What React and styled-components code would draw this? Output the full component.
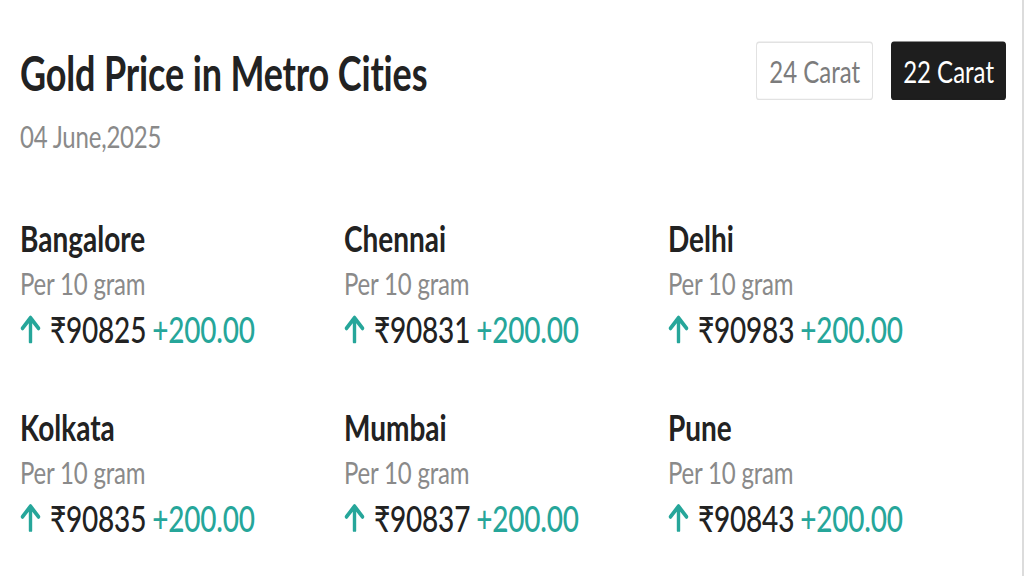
import React, { useState } from "react";
import styled, { createGlobalStyle } from "styled-components";

const GlobalStyle = createGlobalStyle`
  html, body {
    margin: 0;
    padding: 0;
    background: #ffffff;
  }
  body {
    font-family: Lato, "Noto Sans", "DejaVu Sans", sans-serif;
    color: #222;
  }
`;

// the screenshot is stretched vertically, so the whole page is scaled in y
const Frame = styled.div`
  height: 100vh;
  overflow: hidden;
  box-sizing: border-box;
  border-right: 2px solid #dcdcdc;
`;

const Page = styled.div`
  transform: scaleY(1.3);
  transform-origin: top left;
  padding: 32px 16px 0 20px;
`;

const Header = styled.div`
  display: flex;
  justify-content: space-between;
  align-items: flex-start;
`;

const Title = styled.h1`
  margin: 6px 0 0;
  font-size: 36px;
  line-height: 36px;
  font-weight: 700;
  color: #222;
  letter-spacing: -0.15px;
`;

const DateText = styled.div`
  margin-top: 19px;
  font-size: 24px;
  line-height: 24px;
  color: #8a8a8a;
  letter-spacing: -0.2px;
`;

const Toggle = styled.div`
  display: flex;
  gap: 18px;
`;

const CaratButton = styled.button`
  height: 45px;
  padding: 0 ${(p) => (p.$active ? "11px" : "12px")};
  display: flex;
  align-items: center;
  font-family: Lato, "Noto Sans", sans-serif;
  font-size: 24px;
  border-radius: 3px;
  cursor: pointer;
  border: 1px solid ${(p) => (p.$active ? "#1e1e1e" : "#e2e2e2")};
  background: ${(p) => (p.$active ? "#1e1e1e" : "#ffffff")};
  color: ${(p) => (p.$active ? "#ffffff" : "#7c7c7c")};
`;

const Grid = styled.div`
  margin-top: 52px;
  margin-right: 14px;
  display: grid;
  grid-template-columns: repeat(3, 1fr);
  row-gap: 47px;
`;

const Card = styled.div`
  display: flex;
  flex-direction: column;
`;

const City = styled.div`
  font-size: 28px;
  line-height: 28px;
  font-weight: 700;
  color: #222;
`;

const Unit = styled.div`
  margin-top: 9px;
  font-size: 24px;
  line-height: 24px;
  color: #8a8a8a;
  letter-spacing: -0.2px;
`;

const PriceRow = styled.div`
  margin-top: 9px;
  display: flex;
  align-items: center;
  font-size: 28px;
  line-height: 28px;
  font-weight: 500;
  letter-spacing: -0.2px;
`;

const Arrow = styled.svg`
  width: 21px;
  height: 22px;
  margin-right: 9px;
  flex-shrink: 0;
`;

const Price = styled.span`
  color: #222;
  margin-right: 6px;
`;

const Change = styled.span`
  color: #26a69a;
`;

const cities = [
  { name: "Bangalore", price: "90825" },
  { name: "Chennai", price: "90831" },
  { name: "Delhi", price: "90983" },
  { name: "Kolkata", price: "90835" },
  { name: "Mumbai", price: "90837" },
  { name: "Pune", price: "90843" },
];

const UpArrow = () => (
  <Arrow viewBox="0 0 21 22" fill="none">
    <path
      d="M10.5 21V3M2.5 10.5L10.5 2.5L18.5 10.5"
      stroke="#26a69a"
      strokeWidth="3.4"
      strokeLinecap="round"
      strokeLinejoin="round"
    />
  </Arrow>
);

const App = () => {
  const [carat, setCarat] = useState(22);

  return (
    <Frame>
      <GlobalStyle />
      <Page>
        <Header>
          <div>
            <Title>Gold Price in Metro Cities</Title>
            <DateText>04 June,2025</DateText>
          </div>
          <Toggle>
            <CaratButton $active={carat === 24} onClick={() => setCarat(24)}>
              24 Carat
            </CaratButton>
            <CaratButton $active={carat === 22} onClick={() => setCarat(22)}>
              22 Carat
            </CaratButton>
          </Toggle>
        </Header>
        <Grid>
          {cities.map((c) => (
            <Card key={c.name}>
              <City>{c.name}</City>
              <Unit>Per 10 gram</Unit>
              <PriceRow>
                <UpArrow />
                <Price>₹{c.price}</Price>
                <Change>+200.00</Change>
              </PriceRow>
            </Card>
          ))}
        </Grid>
      </Page>
    </Frame>
  );
};

export default App;
